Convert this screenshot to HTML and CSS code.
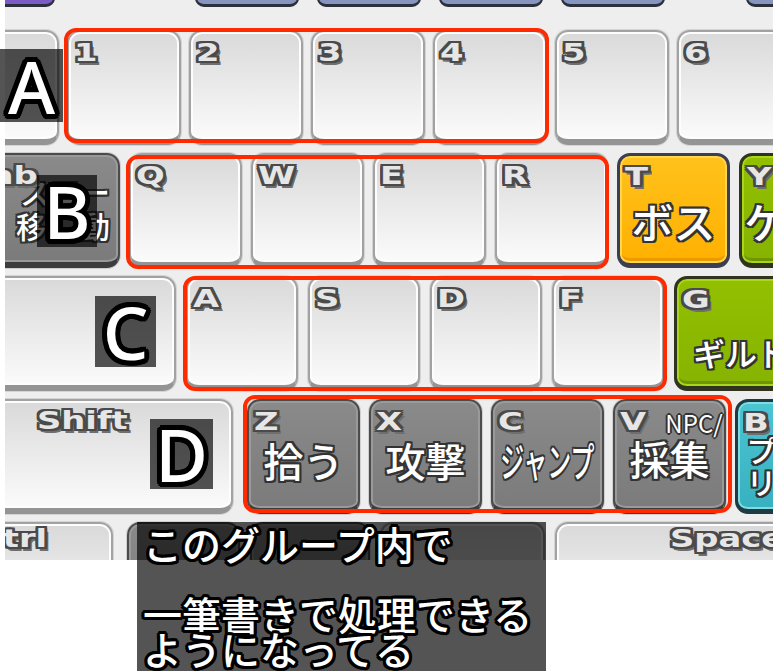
FILE: index.html
```html
<!DOCTYPE html>
<html lang="ja">
<head>
    <meta charset="UTF-8">
    <meta name="viewport" content="width=device-width, initial-scale=1.0">
    <title>キーボード - グループ</title>
    <link rel="stylesheet" href="styles.css">
</head>
<body>
    <div class="stage">
        <div class="keyboard">
            <div class="row row-top">
                <div class="fkey fkey-purple"></div>
                <div class="fkey fkey-first"></div>
                <div class="fkey"></div>
                <div class="fkey"></div>
                <div class="fkey"></div>
                <div class="fkey fkey-far"></div>
            </div>

            <div class="row row-a">
                <div class="key"></div>
                <div class="key"><span class="cap">1</span></div>
                <div class="key"><span class="cap">2</span></div>
                <div class="key"><span class="cap">3</span></div>
                <div class="key"><span class="cap">4</span></div>
                <div class="key"><span class="cap">5</span></div>
                <div class="key"><span class="cap">6</span></div>
            </div>

            <div class="row row-b">
                <div class="key key-dark w155">
                    <span class="cap">Tab</span>
                    <span class="name name-side">スロー<br><span class="spread">移動</span></span>
                </div>
                <div class="key"><span class="cap">Q</span></div>
                <div class="key"><span class="cap">W</span></div>
                <div class="key"><span class="cap">E</span></div>
                <div class="key"><span class="cap">R</span></div>
                <div class="key key-orange"><span class="cap">T</span><span class="name name-low">ボス</span></div>
                <div class="key key-green"><span class="cap">Y</span><span class="name name-low name-left">ケイ</span></div>
            </div>

            <div class="row row-c">
                <div class="key w200"></div>
                <div class="key"><span class="cap">A</span></div>
                <div class="key"><span class="cap">S</span></div>
                <div class="key"><span class="cap">D</span></div>
                <div class="key"><span class="cap">F</span></div>
                <div class="key key-green"><span class="cap">G</span><span class="name name-guild">ギルド</span></div>
            </div>

            <div class="row row-d">
                <div class="key w280 key-shift"><span class="cap">Shift</span></div>
                <div class="key key-dark"><span class="cap">Z</span><span class="name">拾う</span></div>
                <div class="key key-dark"><span class="cap">X</span><span class="name">攻撃</span></div>
                <div class="key key-dark"><span class="cap">C</span><span class="name"><span class="squeeze">ジャンプ</span></span></div>
                <div class="key key-dark">
                    <span class="cap">V</span><span class="note">NPC/</span>
                    <span class="name name-under">採集</span>
                </div>
                <div class="key key-teal"><span class="cap">B</span><span class="name name-two">プレイ<br>リスト</span></div>
            </div>

            <div class="row row-bottom">
                <div class="key w173 key-ctrl"><span class="cap">Ctrl</span></div>
                <div class="key key-dark w113"></div>
                <div class="key key-dark w120"></div>
                <div class="key w165"></div>
                <div class="key w300 key-space"><span class="cap">Space</span></div>
            </div>
        </div>

        <!-- group frames -->
        <div class="group group-a"></div>
        <div class="group group-b"></div>
        <div class="group group-c"></div>
        <div class="group group-d"></div>

        <div class="tag tag-a">A</div>
        <div class="tag tag-b">B</div>
        <div class="tag tag-c">C</div>
        <div class="tag tag-d">D</div>

        <div class="caption">
            <p class="caption-line caption-first">このグループ内で</p>
            <p class="caption-line">一筆書きで処理できる</p>
            <p class="caption-line">ようになってる</p>
        </div>
    </div>
</body>
</html>
```

FILE: styles.css
```css
body {
    margin: 0;
    background: #ffffff;
    font-family: "Noto Sans CJK JP", "Noto Sans", sans-serif;
}

.stage {
    position: relative;
    width: 773px;
    height: 671px;
    overflow: hidden;
}

.keyboard {
    margin-left: 5px;
    width: 768px;
    height: 560px;
    background: #eeeeee;
    overflow: hidden;
    display: flex;
    flex-direction: column;
    gap: 8px;
}

.row {
    display: flex;
    flex: none;
    height: 115px;
}

.row-top {
    height: 100px;
    margin-top: -93px;
    margin-left: -60px;
    gap: 18px;
}

.row-a {
    margin-top: 15px;
    margin-left: -60px;
    gap: 8px;
}

.row-b {
    margin-left: -40px;
    gap: 9px;
}

.row-c {
    margin-left: -29px;
    gap: 10px;
}

.row-d {
    margin-left: -52px;
    gap: 9px;
}

.row-bottom {
    margin-left: -65px;
    gap: 10px;
}

/* top function keys, only their bottoms show */
.fkey {
    flex: none;
    box-sizing: border-box;
    width: 104px;
    height: 100px;
    background: linear-gradient(#9aaad0, #8595c0);
    border: 2px solid #2c2f3c;
    border-bottom-width: 3px;
    border-radius: 9px;
}

.fkey-purple {
    width: 110px;
    background: #7b5cc4;
}

.fkey-first {
    margin-left: 122px;
}

.fkey-far {
    margin-left: 63px;
}

/* keys */
.key {
    flex: none;
    box-sizing: border-box;
    width: 114px;
    height: 115px;
    border: 2px solid #a2a2a2;
    border-bottom: 6px solid #949494;
    border-radius: 13px;
    background: linear-gradient(#d9d9d9, #ececec 55%, #fbfbfb);
    box-shadow: inset 0 0 0 2px #fdfdfd, 0 0 0 1px #d4d4d4;
    overflow: hidden;
}

.row-b .key { width: 113px; }
.row-c .key { width: 112px; }
.row-d .key { width: 113px; }

.row-b .w155 { width: 155px; }
.row-c .w200 { width: 200px; }
.row-d .w280 { width: 280px; margin-right: 5px; }
.row-bottom .w173 { width: 173px; margin-right: 4px; }
.row-bottom .w113 { width: 113px; }
.row-bottom .w120 { width: 120px; }
.row-bottom .w165 { width: 165px; }
.row-bottom .w300 { width: 300px; }

.key-dark {
    border-color: #4b4b4b;
    border-bottom-color: #3d3d3d;
    background: linear-gradient(#8a8a8a, #7b7b7b);
    box-shadow: inset 0 0 0 2px #9a9a9a, 0 0 0 1px #cfcfcf;
}

.key-orange {
    border: 3px solid #3b3f50;
    border-bottom-width: 5px;
    background: linear-gradient(#ffc21c, #ffb000);
    box-shadow: inset 0 0 0 2px #ffd650, inset 0 -5px 0 #ec9a00;
}

.key-green {
    border: 3px solid #30341f;
    border-bottom-width: 5px;
    background: linear-gradient(#92c000, #86b300);
    box-shadow: inset 0 0 0 2px #a8d61a, inset 0 -5px 0 #6f9600;
}

.key-teal {
    border: 3px solid #1f3a40;
    border-bottom-width: 5px;
    background: linear-gradient(#4cc4d2, #37b0c0);
    box-shadow: inset 0 0 0 2px #7fdbe4;
}

/* small key captions */
.cap {
    display: inline-block;
    margin: 7px 0 0 5px;
    font-family: "DejaVu Sans", sans-serif;
    font-weight: bold;
    font-size: 25px;
    line-height: 28px;
    color: #e6e6e6;
    transform: scaleX(1.35);
    transform-origin: left top;
    text-shadow:
        -2px -2px 0 #4a4a4a, 0 -2px 0 #4a4a4a, 2px -2px 0 #4a4a4a,
        -2px 0 0 #4a4a4a, 2px 0 0 #4a4a4a,
        -2px 2px 0 #4a4a4a, 0 2px 0 #4a4a4a, 2px 2px 0 #4a4a4a,
        3px 4px 0 #6e6e6e, 1px 4px 0 #6e6e6e;
}

.key-shift .cap { margin-left: 82px; margin-top: 6px; }
.key-ctrl .cap { margin-left: 36px; margin-top: 1px; }
.key-space .cap { margin-left: 113px; margin-top: 1px; }

.note {
    display: inline-block;
    margin-left: 26px;
    font-size: 24px;
    line-height: 26px;
    color: #ffffff;
    vertical-align: top;
    margin-top: 9px;
    text-shadow:
        -1px -1px 0 #333, 1px -1px 0 #333, -1px 1px 0 #333, 1px 1px 0 #333,
        0 2px 0 #333, 2px 0 0 #333, 0 -2px 0 #333, -2px 0 0 #333;
}

/* big key text */
.name {
    display: block;
    margin-top: 2px;
    text-align: center;
    font-size: 40px;
    line-height: 44px;
    font-weight: 500;
    color: #ffffff;
    white-space: nowrap;
    text-shadow:
        -2px -2px 0 #333, 0 -2px 0 #333, 2px -2px 0 #333,
        -2px 0 0 #333, 2px 0 0 #333,
        -2px 2px 0 #333, 0 2px 0 #333, 2px 2px 0 #333;
}

.name-low {
    margin-top: 8px;
    font-size: 42px;
}

.name-left {
    text-align: left;
    padding-left: 2px;
}

.name-under {
    margin-top: 0;
}

.name-side {
    margin-top: -16px;
    padding-right: 8px;
    text-align: right;
    font-size: 30px;
    line-height: 34px;
}

.spread {
    letter-spacing: 34px;
    margin-right: -34px;
}

.name-guild {
    margin-top: 20px;
    padding-left: 16px;
    text-align: left;
    font-size: 32px;
    line-height: 36px;
}

.name-two {
    margin-top: -4px;
    font-size: 30px;
    line-height: 32px;
}

.squeeze {
    display: inline-block;
    transform: scaleX(0.6);
    margin: 0 -40px;
}

/* red group frames */
.group {
    position: absolute;
    box-sizing: border-box;
    border: 4px solid #ff2a00;
    border-radius: 12px;
}

.group-a { left: 64px; top: 28px; width: 485px; height: 115px; }
.group-b { left: 126px; top: 155px; width: 483px; height: 114px; }
.group-c { left: 183px; top: 276px; width: 484px; height: 115px; }
.group-d { left: 243px; top: 395px; width: 489px; height: 118px; }

/* letter tags */
.tag {
    position: absolute;
    display: flex;
    justify-content: center;
    align-items: center;
    background: rgba(0, 0, 0, 0.67);
    font-family: "Noto Sans", sans-serif;
    font-size: 72px;
    font-weight: 500;
    line-height: 1;
    color: #ffffff;
    text-shadow:
        5px 0 0 #000, -5px 0 0 #000, 0 5px 0 #000, 0 -5px 0 #000,
        3.5px 3.5px 0 #000, -3.5px 3.5px 0 #000, 3.5px -3.5px 0 #000, -3.5px -3.5px 0 #000,
        4.6px 1.9px 0 #000, 1.9px 4.6px 0 #000, -1.9px 4.6px 0 #000, -4.6px 1.9px 0 #000,
        -4.6px -1.9px 0 #000, -1.9px -4.6px 0 #000, 1.9px -4.6px 0 #000, 4.6px -1.9px 0 #000;
}

.tag-a { left: 0; top: 49px; width: 63px; height: 73px; }
.tag-b { left: 37px; top: 175px; width: 60px; height: 72px; }
.tag-c { left: 95px; top: 296px; width: 61px; height: 71px; }
.tag-d { left: 150px; top: 419px; width: 63px; height: 70px; }

/* caption box */
.caption {
    position: absolute;
    left: 137px;
    top: 522px;
    width: 409px;
    height: 149px;
    box-sizing: border-box;
    padding: 4px 0 0 6px;
    background: rgba(0, 0, 0, 0.67);
}

.caption-line {
    margin: 0;
    font-size: 39px;
    line-height: 35px;
    font-weight: 500;
    color: #ffffff;
    white-space: nowrap;
    text-shadow:
        3px 0 0 #000, -3px 0 0 #000, 0 3px 0 #000, 0 -3px 0 #000,
        2px 2px 0 #000, -2px 2px 0 #000, 2px -2px 0 #000, -2px -2px 0 #000,
        3px 1.5px 0 #000, -3px 1.5px 0 #000, 3px -1.5px 0 #000, -3px -1.5px 0 #000,
        1.5px 3px 0 #000, -1.5px 3px 0 #000, 1.5px -3px 0 #000, -1.5px -3px 0 #000;
}

.caption-first {
    margin-bottom: 35px;
}
```
